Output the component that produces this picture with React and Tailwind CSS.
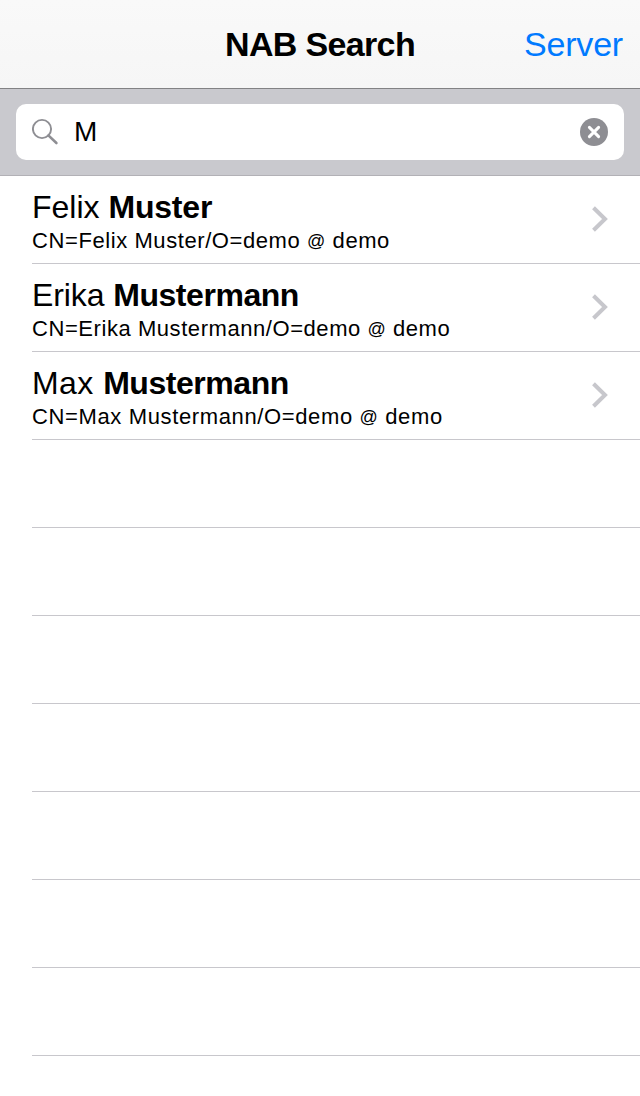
const people = [
  { first: 'Felix', last: 'Muster', firstClass: '', lastClass: 'tracking-[-0.2px]', idClass: 'tracking-[0.58px]' },
  { first: 'Erika', last: 'Mustermann', firstClass: 'tracking-[-0.1px]', lastClass: 'tracking-[-0.45px]', idClass: 'tracking-[0.56px]' },
  { first: 'Max', last: 'Mustermann', firstClass: 'tracking-[0.45px]', lastClass: 'tracking-[-0.45px]', idClass: 'tracking-[0.63px]' },
];

function SearchIcon() {
  return (
    <svg className="h-7 w-7 shrink-0" viewBox="0 0 28 28" fill="none" stroke="#8e8e93">
      <circle cx="10" cy="11" r="9.1" strokeWidth="1.9" />
      <path d="M16.4 17.4 L24.4 25" strokeWidth="2.6" strokeLinecap="round" />
    </svg>
  );
}

function ClearIcon() {
  return (
    <svg className="h-7 w-7 shrink-0" viewBox="0 0 28 28" fill="none">
      <circle cx="14" cy="14" r="14" fill="#8e8e93" />
      <path d="M9.4 9.4 L18.6 18.6 M18.6 9.4 L9.4 18.6" stroke="#fff" strokeWidth="3" strokeLinecap="round" />
    </svg>
  );
}

function Chevron() {
  return (
    <svg className="h-[26px] w-4 shrink-0" viewBox="0 0 16 26" fill="none">
      <path d="M1.5 1.7 L13 13 L1.5 24.3" stroke="#c7c7cc" strokeWidth="4" />
    </svg>
  );
}

function PersonRow({ first, last, firstClass, lastClass, idClass }) {
  return (
    <li className="ml-8 flex h-[88px] justify-between border-b border-[#c8c7cc] pr-8">
      <div className="pt-[11px] whitespace-nowrap">
        <div className="h-10 text-[32px] leading-10">
          <span className={firstClass}>{first} </span>
          <b className={`font-bold ${lastClass}`}>{last}</b>
        </div>
        <div className={`h-7 text-[22px] leading-7 ${idClass}`}>
          CN={first} {last}/O=demo <span className="relative -top-px text-[18px]">@</span> demo
        </div>
      </div>
      <div className="pt-[30px]">
        <Chevron />
      </div>
    </li>
  );
}

export default function App() {
  return (
    <div className="h-[1096px] w-[640px] overflow-hidden bg-white font-['Liberation_Sans',Arial,sans-serif] text-black">
      <header className="grid h-[89px] grid-cols-[1fr_auto_1fr] items-center border-b border-[#828284] bg-linear-to-b from-[#f9f9f9] to-[#f6f6f6] pr-[17px] pl-[17px] text-[34px] leading-10">
        <span />
        <h1 className="font-bold tracking-[-0.65px]">NAB Search</h1>
        <button className="justify-self-end tracking-[-0.2px] text-[#007aff]">Server</button>
      </header>
      <div className="h-[87px] border-b border-[#b2b1b6] bg-[#c9c9ce] px-4 pt-[15px]">
        <div className="flex h-14 items-center rounded-[10px] bg-white px-4">
          <SearchIcon />
          <span className="ml-[14px] flex-1 text-[28px] leading-8">M</span>
          <ClearIcon />
        </div>
      </div>
      <ul>
        {people.map((p) => (
          <PersonRow key={p.first} {...p} />
        ))}
        {Array.from({ length: 7 }, (_, i) => (
          <li key={i} className="ml-8 h-[88px] border-b border-[#c8c7cc]" />
        ))}
      </ul>
    </div>
  );
}
